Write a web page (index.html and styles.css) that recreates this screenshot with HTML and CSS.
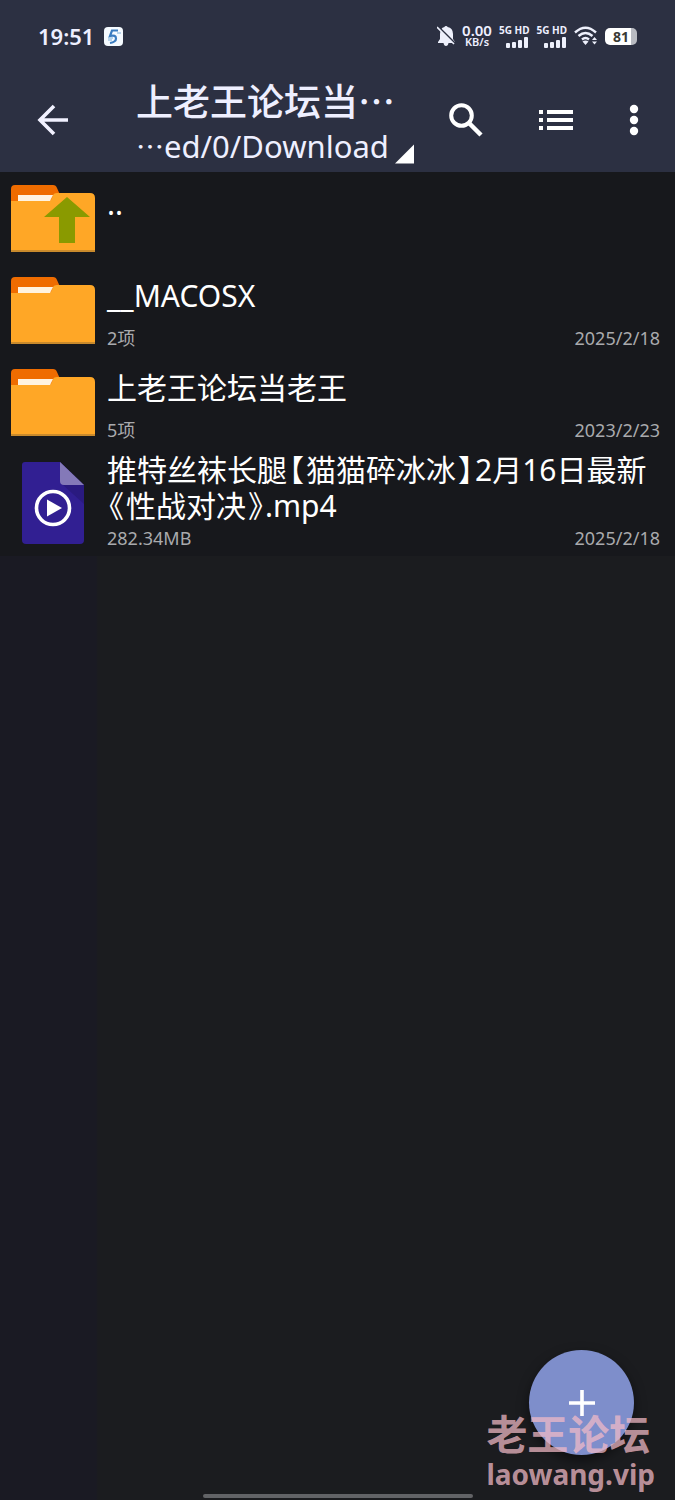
FILE: index.html
```html
<!DOCTYPE html>
<html lang="zh-CN">
<head>
<meta charset="utf-8">
<meta name="viewport" content="width=device-width, initial-scale=1">
<title>Download</title>
<link rel="stylesheet" href="styles.css">
</head>
<body>
<svg class="defs" width="0" height="0" aria-hidden="true">
  <symbol id="folder" viewBox="0 0 84 68">
    <path fill="#ef6c00" d="M0 20V4Q0 0 4 0H42Q45 0 46 3L50 12V22H0Z"/>
    <path fill="#ffa726" d="M0 16H38Q40 16 41 13L42 10Q43 8 46 8H79Q84 8 84 13V67H0Z"/>
    <path fill="#fff3e0" d="M7 10H42L39 16H7Z"/>
    <path fill="#c98a2c" d="M0 65H84V67H0Z"/>
  </symbol>
  <symbol id="signal" viewBox="0 0 24 11">
    <g fill="#eef0fc"><rect x="1" y="6" width="4" height="5" rx="1"/><rect x="7" y="5" width="4" height="6" rx="1"/><rect x="13" y="3" width="4" height="8" rx="1"/><rect x="19" y="0" width="4" height="11" rx="1"/></g>
  </symbol>
</svg>
<div class="screen">
  <header class="header">
    <div class="status">
      <time class="clock">19:51</time>
      <svg class="app-badge" width="19" height="19" viewBox="0 0 19 19" aria-hidden="true">
        <rect width="19" height="19" rx="4" fill="#f5faff"/>
        <path d="M14 3.500H8L6 9Q12 7.500 12 11.500Q12 15 6 16" fill="none" stroke="#3b7cc0" stroke-width="2.200"/>
        <path d="M4 11H9M4 13H8M13 6H17" stroke="#79aeda" stroke-width="1"/>
      </svg>
      <div class="indicators">
        <svg width="18" height="20" viewBox="0 0 18 20" aria-hidden="true">
          <path fill="#eef0fc" d="M9 0Q10.500 0 10.500 1Q16 2 16 8V13L18 16V17H1V16L3 13V8Q3 2 7.500 1Q7.500 0 9 0ZM6.500 17H11.500Q11 20 9 20T6.500 17Z"/>
          <path d="M1.500 1L18 17.500" stroke="#2c3042" stroke-width="2"/><path d="M0 1L17 18" stroke="#eef0fc" stroke-width="1.600"/>
        </svg>
        <div class="speed"><span class="rate">0.00</span><span class="unit">KB/s</span></div>
        <div class="sim"><span>5G HD</span><svg width="24" height="11"><use href="#signal"/></svg></div>
        <div class="sim"><span>5G HD</span><svg width="24" height="11"><use href="#signal"/></svg></div>
        <svg class="wifi" width="24" height="20" viewBox="0 0 24 20" aria-hidden="true">
          <g fill="none" stroke="#eef0fc" stroke-width="2.400"><path d="M1 6.500Q11.500-3 22 6.500"/><path d="M4.500 10Q11.500 4 18.500 10"/><path d="M8 13.500Q11.500 10.500 15 13.500"/></g>
          <path fill="#eef0fc" d="M8.500 15.500Q11.500 13.500 14.500 15.500L11.500 19ZM18 14L20.500 11L23 14ZM18 15.500H23L20.500 18.500Z"/>
        </svg>
        <div class="battery">81</div>
      </div>
    </div>
    <div class="toolbar">
      <button class="tool" aria-label="返回"><svg width="32" height="32" viewBox="0 0 32 32"><path d="M32 16H4M18 2L4 16L18 30" fill="none" stroke="#f1f1ff" stroke-width="3.600"/></svg></button>
      <button class="location">
        <span class="title">上老王论坛当…</span>
        <span class="path"><span class="dots">…</span>ed/0/Download</span>
        <svg class="corner" width="19" height="20" viewBox="0 0 20 20" aria-hidden="true"><path d="M20 0V20H0Z" fill="#fff"/></svg>
      </button>
      <div class="actions">
        <button class="tool" aria-label="搜索"><svg width="34" height="34" viewBox="0 0 34 34"><circle cx="12.500" cy="12.500" r="10.300" fill="none" stroke="#fff" stroke-width="4"/><path d="M20 20L32 32" stroke="#fff" stroke-width="4.500"/></svg></button>
        <button class="tool" aria-label="列表"><svg width="34" height="20" viewBox="0 0 34 20"><path d="M0 2H4M8 2H34M0 10H4M8 10H34M0 18H4M8 18H34" stroke="#fff" stroke-width="4"/></svg></button>
        <button class="tool" aria-label="更多"><svg width="10" height="32" viewBox="0 0 10 32"><g fill="#fff"><circle cx="5" cy="5" r="4.200"/><circle cx="5" cy="16" r="4.200"/><circle cx="5" cy="27" r="4.200"/></g></svg></button>
      </div>
    </div>
  </header>

  <main class="content">
    <ul class="files">
      <li class="file">
        <svg class="icon" width="84" height="68" viewBox="0 0 84 68" aria-hidden="true"><use href="#folder"/><path fill="#8a9a00" d="M56 12L79 32H64V58H48V32H33Z"/></svg>
        <div class="info"><div class="name">..</div><div class="meta"></div></div>
      </li>
      <li class="file">
        <svg class="icon" width="84" height="68" aria-hidden="true"><use href="#folder"/></svg>
        <div class="info"><div class="name">__MACOSX</div><div class="meta"><span>2项</span><time>2025/2/18</time></div></div>
      </li>
      <li class="file">
        <svg class="icon" width="84" height="68" aria-hidden="true"><use href="#folder"/></svg>
        <div class="info"><div class="name">上老王论坛当老王</div><div class="meta"><span>5项</span><time>2023/2/23</time></div></div>
      </li>
      <li class="file">
        <svg class="icon" width="84" height="84" viewBox="0 0 84 84" aria-hidden="true">
          <path fill="#311f92" d="M14 1H49L73 24V79Q73 83 69 83H15Q11 83 11 79V4Q11 1 14 1Z"/>
          <path fill="#2a1a80" d="M52 24H73V43Z"/>
          <path fill="#8479b8" d="M49 1L73 24H53Q49 24 49 20Z"/>
          <circle cx="42" cy="47" r="16.500" fill="none" stroke="#fff" stroke-width="3.600"/>
          <path fill="#fff" d="M36 38.500L51 47L36 55.500Z"/>
        </svg>
        <div class="info"><div class="name">推特丝袜长腿<span class="bracket">【</span>猫猫碎冰冰<span class="bracket">】</span>2月16日最新<span class="bracket">《</span>性战对决<span class="bracket">》</span>.mp4</div><div class="meta"><span>282.34MB</span><time>2025/2/18</time></div></div>
      </li>
    </ul>
  </main>

  <button class="fab" aria-label="新建"><svg width="28" height="28" viewBox="0 0 28 28"><path d="M14 1V27M1 14H27" stroke="#fff" stroke-width="3.600"/></svg></button>
  <div class="watermark"><div class="mark-name">老王论坛</div><div class="mark-site">laowang.vip</div></div>
  <div class="home-bar"></div>
</div>
</body>
</html>
```
FILE: styles.css
```css
* { box-sizing: border-box; }
body {
  margin: 0;
  background: #1b1c1f;
  color: #fff;
  font-family: "Noto Sans", "Noto Sans CJK SC", sans-serif;
}
button {
  border: 0;
  padding: 0;
  background: none;
  color: inherit;
  font: inherit;
  text-align: left;
}
svg { display: block; flex: none; }
.defs { position: absolute; }
.screen {
  position: relative;
  display: flex;
  flex-direction: column;
  min-height: 100vh;
}

.header { background: #2c3042; color: #eeefff; }
.status {
  display: flex;
  align-items: center;
  height: 72px;
  padding: 0 38px;
}
.clock { font-size: 22px; font-weight: 600; line-height: 30px; }
.app-badge { margin-left: 10px; }
.indicators {
  display: flex;
  align-items: center;
  gap: 7px;
  margin-left: auto;
}
.speed, .sim { display: flex; flex-direction: column; }
.speed { align-items: center; font-weight: 600; }
.rate { font-size: 15px; line-height: 12px; }
.unit { font-size: 11px; line-height: 12px; }
.sim {
  align-items: flex-end;
  gap: 2px;
  font-size: 10px;
  font-weight: 700;
  line-height: 10px;
}
.battery {
  width: 32px;
  height: 17px;
  border-radius: 5px;
  background: linear-gradient(90deg, #fff 81%, #b9bbc2 81%);
  color: #3a3b35;
  font-size: 14px;
  font-weight: 700;
  line-height: 17px;
  text-align: center;
}

.toolbar {
  display: flex;
  align-items: center;
  height: 100px;
  padding: 0 36px;
}
.tool {
  display: grid;
  place-items: center;
  flex: none;
  height: 48px;
  padding-bottom: 4px;
}
.location {
  display: grid;
  grid-template-columns: auto auto;
  justify-content: start;
  align-items: end;
  column-gap: 6px;
  margin-left: 68px;
}
.title {
  grid-column: 1 / -1;
  font-family: "Noto Sans CJK SC", sans-serif;
  font-size: 37px;
  font-weight: 500;
  line-height: 48px;
  white-space: nowrap;
}
.path { font-size: 31px; line-height: 44px; white-space: nowrap; }
.dots { font-family: "Noto Sans CJK SC", sans-serif; font-size: 28px; line-height: 1; }
.corner { margin-bottom: 4px; }
.actions { display: flex; align-items: center; gap: 56px; margin-left: auto; }

.content {
  flex: 1;
  background: linear-gradient(90deg, #1a1a23 96px, #1b1c1f 98px);
}
.files { margin: 0; padding: 0; list-style: none; background: #17181c; }
.file {
  display: flex;
  align-items: center;
  gap: 12px;
  min-height: 92px;
  padding: 0 15px 0 11px;
}
.icon { margin-top: 2px; }
.info {
  display: flex;
  flex: 1;
  flex-direction: column;
  align-self: stretch;
  padding: 4px 0 6px;
}
.name {
  margin: auto 0;
  padding-bottom: 2px;
  font-size: 30px;
  line-height: 36px;
}
.bracket { padding: 0 2px; font-feature-settings: "halt"; }
.meta {
  display: flex;
  justify-content: space-between;
  height: 24px;
  color: #a9aaad;
  font-size: 18px;
  line-height: 24px;
}

.fab {
  position: absolute;
  right: 41px;
  bottom: 45px;
  display: grid;
  place-items: center;
  width: 105px;
  height: 105px;
  border-radius: 50%;
  background: #7e8ecb;
  box-shadow: 0 5px 12px rgba(0, 0, 0, 0.5);
}
.watermark {
  position: absolute;
  right: 20px;
  bottom: 8px;
  color: rgba(244, 187, 199, 0.74);
  font-weight: 700;
  pointer-events: none;
}
.mark-name { font-size: 41px; line-height: 44px; }
.mark-site { font-size: 28px; line-height: 36px; }
.home-bar {
  position: absolute;
  bottom: 2px;
  left: 30%;
  width: 40%;
  height: 4px;
  border-radius: 2px;
  background: #626366;
}
```
